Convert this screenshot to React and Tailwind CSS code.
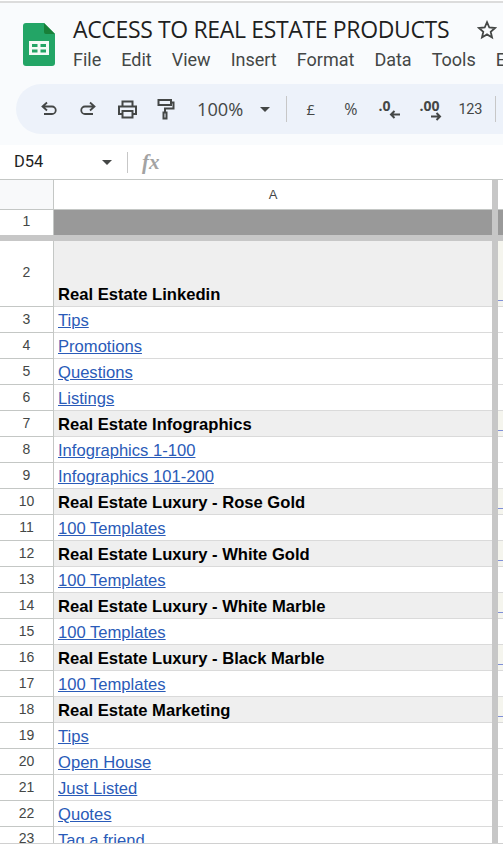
const rows = [
  ["3", "Tips", 0], ["4", "Promotions", 0], ["5", "Questions", 0], ["6", "Listings", 0],
  ["7", "Real Estate Infographics", 1], ["8", "Infographics 1-100", 0], ["9", "Infographics 101-200", 0],
  ["10", "Real Estate Luxury - Rose Gold", 1], ["11", "100 Templates", 0],
  ["12", "Real Estate Luxury - White Gold", 1], ["13", "100 Templates", 0],
  ["14", "Real Estate Luxury - White Marble", 1], ["15", "100 Templates", 0],
  ["16", "Real Estate Luxury - Black Marble", 1], ["17", "100 Templates", 0],
  ["18", "Real Estate Marketing", 1], ["19", "Tips", 0], ["20", "Open House", 0],
  ["21", "Just Listed", 0], ["22", "Quotes", 0],
];

function Icon({ children, w = 20, h = 20 }) {
  return (
    <svg width={w} height={h} viewBox={`0 0 ${w} ${h}`} fill="none" stroke="#444746" strokeWidth="2" className="shrink-0">
      {children}
    </svg>
  );
}

function SheetsLogo() {
  return (
    <svg width="32" height="43" viewBox="0 0 32 43" className="shrink-0">
      <path d="M3 0H21L32 11V40a3 3 0 0 1-3 3H3a3 3 0 0 1-3-3V3a3 3 0 0 1 3-3z" fill="#23a566" />
      <path d="M21 0L32 11H23a2 2 0 0 1-2-2z" fill="#188038" />
      <path d="M6 18H26V32H6z M9 21V24H14.5V21z M17.5 21V24H23V21z M9 26.5V29.5H14.5V26.5z M17.5 26.5V29.5H23V26.5z" fill="#f4fbf6" fillRule="evenodd" />
    </svg>
  );
}

function Row({ h = "h-[26px]", num, bold, children, numClass = "" }) {
  return (
    <div className={`grid grid-cols-[54px_438px_6px_5px] ${h}`}>
      <div className="flex items-center justify-center bg-white border-r border-b border-[#c4c7c5] text-[14px] text-[#444746] font-['Liberation_Sans',sans-serif]">
        <span className={numClass}>{num}</span>
      </div>
      <div className={`flex items-end pl-[4px] border-b border-[#dadada] text-[16.6px] leading-[22px] font-['Liberation_Sans',sans-serif] overflow-hidden whitespace-nowrap ${bold ? "bg-[#efefef] font-bold text-black" : "bg-white text-[#2a5bb8] underline"}`}>
        {children}
      </div>
      <div className="bg-[#c7c7c7]" />
      <div className={`flex items-end pb-[5px] border-b border-[#dadada] ${bold ? "bg-[#f5f5ee]" : "bg-white"}`}>
        {bold ? <span className="block w-full h-[1px] bg-[#7f8fd8]" /> : null}
      </div>
    </div>
  );
}

export default function App() {
  return (
    <div className="w-[503px] h-[845px] overflow-hidden bg-white relative">
      <div className="h-[145px] bg-[#f9fbfd] border-t-[2px] border-[#dcdcdc] mt-[1px] overflow-hidden">
        <div className="flex pl-[23px] pt-[20px] h-[81px]">
          <SheetsLogo />
          <div className="ml-[18px] min-w-0 -mt-[7px]">
            <div className="flex items-center h-[26px] whitespace-nowrap">
              <span className="text-[23px] tracking-[-0.35px] leading-[26px] text-[#1f1f1f] font-['Open_Sans',sans-serif]">ACCESS TO REAL ESTATE PRODUCTS</span>
              <svg width="20" height="20" viewBox="0 0 20 20" fill="none" stroke="#444746" strokeWidth="1.8" className="ml-[28px] shrink-0 mt-[2px]">
                <path d="M10 2.2l2.3 5.3 5.7.5-4.3 3.8 1.3 5.6-5-3-5 3 1.3-5.6L2 8l5.7-.5z" />
              </svg>
            </div>
            <div className="flex gap-[20px] mt-[6px] text-[18px] leading-[24px] text-[#444746] font-['Roboto',sans-serif] whitespace-nowrap">
              <span>File</span><span>Edit</span><span>View</span><span>Insert</span><span>Format</span><span>Data</span><span>Tools</span><span>E</span>
            </div>
          </div>
        </div>
        <div className="ml-[16px] w-[600px] h-[50px] rounded-l-[25px] bg-[#edf2fa] flex items-center pl-[24px] text-[#444746] whitespace-nowrap">
          <Icon w={18} h={18}>
            <path d="M7 2.5L2.5 6.5 7 10.5M3 6.5H12a3.7 3.7 0 0 1 0 7.5H4" strokeWidth="1.8" />
          </Icon>
          <div className="ml-[21px]">
            <Icon w={18} h={18}>
              <path d="M11 2.5L15.5 6.5 11 10.5M15 6.5H6a3.7 3.7 0 0 0 0 7.5H14" strokeWidth="1.8" />
            </Icon>
          </div>
          <div className="ml-[20px]">
            <Icon w={21} h={19}>
              <path d="M5.5 6V1.5H15.5V6M5 14H2V6.5H19V14H16M5.5 11H15.5V17.5H5.5z" strokeWidth="2" />
            </Icon>
          </div>
          <div className="ml-[19px]">
            <Icon w={18} h={22}>
              <path d="M1.5 2H14V7H1.5zM14 4.5H16.5V10.5H8V14" strokeWidth="2" />
              <path d="M6.5 14.5H9.5V20.5H6.5z" strokeWidth="2" />
            </Icon>
          </div>
          <span className="ml-[22px] text-[18.2px] font-['Open_Sans',sans-serif] leading-none">100%</span>
          <span className="ml-[17px] w-0 h-0 border-x-[5px] border-t-[5px] border-x-transparent border-t-[#444746]" />
          <span className="ml-[16px] w-[1px] h-[26px] bg-[#c7c7c7]" />
          <span className="ml-[17px] w-[13px] text-center text-[15px] font-['Open_Sans',sans-serif] leading-none">£</span>
          <span className="ml-[27px] text-[16px] font-['Open_Sans',sans-serif] leading-none">%</span>
          <div className="ml-[21px] relative w-[23px] h-[24px]">
            <span className="absolute left-0 top-0 text-[14px] font-bold font-['Open_Sans',sans-serif] leading-[18px]">.0</span>
            <svg width="12" height="9" viewBox="0 0 12 9" className="absolute left-[11px] top-[13px]" fill="none" stroke="#444746" strokeWidth="2"><path d="M11 4.5H2M5.5 1L2 4.5 5.5 8" /></svg>
          </div>
          <div className="ml-[18px] relative w-[23px] h-[24px]">
            <span className="absolute left-0 top-0 text-[14px] font-bold font-['Open_Sans',sans-serif] leading-[18px]">.00</span>
            <svg width="12" height="9" viewBox="0 0 12 9" className="absolute left-[11px] top-[15px]" fill="none" stroke="#444746" strokeWidth="2"><path d="M1 4.5H10M6.5 1L10 4.5 6.5 8" /></svg>
          </div>
          <span className="ml-[16px] mt-[2px] text-[14.5px] tracking-[-0.3px] font-['Roboto',sans-serif] leading-none">123</span>
          <span className="ml-[13px] w-[1px] h-[26px] bg-[#c7c7c7]" />
        </div>
      </div>

      <div className="h-[35px] flex items-center bg-white border-b border-[#c4c7c5] font-['Roboto',sans-serif] -mt-[1px]">
        <span className="ml-[14px] w-[88px] text-[16.5px] text-[#1f1f1f]">D54</span>
        <span className="w-0 h-0 border-x-[5px] border-t-[5px] border-x-transparent border-t-[#444746]" />
        <span className="ml-[15px] w-[1px] h-[21px] bg-[#c7c7c7]" />
        <span className="ml-[14px] text-[21px] italic font-bold text-[#a3a3a3] font-['Liberation_Serif',serif] leading-none">fx</span>
      </div>

      <div className="grid grid-cols-[54px_438px_6px_5px] h-[30px]">
        <div className="bg-[#f8f9fa] border-r border-b border-[#c4c7c5]" />
        <div className="flex items-center justify-center bg-white border-b border-[#c4c7c5] text-[13px] text-[#444746] font-['Liberation_Sans',sans-serif]">A</div>
        <div className="bg-[#c7c7c7]" />
        <div className="bg-white border-b border-[#c4c7c5]" />
      </div>

      <div className="grid grid-cols-[54px_438px_6px_5px] h-[25px]">
        <div className="flex items-center justify-center bg-white border-r border-[#c4c7c5] text-[14px] text-[#444746] font-['Liberation_Sans',sans-serif]"><span className="-mt-[2px]">1</span></div>
        <div className="bg-[#999999]" />
        <div className="bg-[#c7c7c7]" />
        <div className="bg-[#999999]" />
      </div>
      <div className="h-[6px] bg-[#c7c7c7]" />

      <Row h="h-[66px]" num="2" bold numClass="-mt-[3px]">Real Estate Linkedin</Row>
      {rows.map(([n, t, b]) => (
        <Row key={n} num={n} bold={!!b}>{t}</Row>
      ))}
      <div className="grid grid-cols-[54px_438px_6px_5px] h-[16px]">
        <div className="flex items-start justify-center pt-[2px] bg-white border-r border-[#c4c7c5] text-[14px] text-[#444746] font-['Liberation_Sans',sans-serif] leading-[18px] overflow-hidden">23</div>
        <div className="pl-[4px] pt-[3px] bg-white text-[#2a5bb8] underline text-[16.6px] leading-[22px] font-['Liberation_Sans',sans-serif] overflow-hidden whitespace-nowrap">Tag a friend</div>
        <div className="bg-[#c7c7c7]" />
        <div className="bg-white" />
      </div>
      <div className="h-[1px] bg-[#d0d0d0]" />
    </div>
  );
}
